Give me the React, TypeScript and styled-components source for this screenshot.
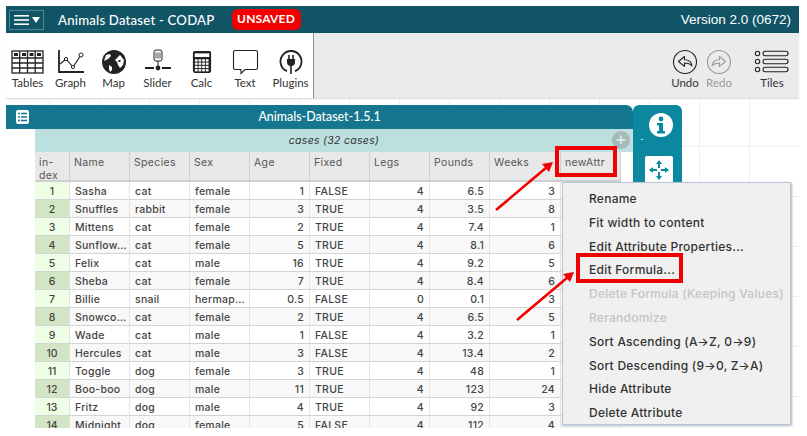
import React from "react";
import styled, { createGlobalStyle } from "styled-components";

const Global = createGlobalStyle`
  html, body { margin: 0; padding: 0; background: #fff; }
  body { width: 807px; height: 436px; overflow: hidden; font-family: "Inter", "Liberation Sans", sans-serif; }
`;

const Page = styled.div`
  position: relative;
  width: 807px;
  height: 436px;
  padding: 6px 8px 8px 6px;
  box-sizing: border-box;
  display: flex;
  flex-direction: column;
  overflow: hidden;
`;

const Header = styled.header`
  height: 27px;
  flex: none;
  background: #115466;
  color: #fff;
  display: flex;
  align-items: center;
  padding: 0 8px 0 3px;
`;

const MenuButton = styled.div`
  width: 35px;
  height: 20px;
  box-sizing: border-box;
  border: 1px solid #4f8592;
  display: flex;
  align-items: center;
  justify-content: center;
  gap: 2px;
`;

const Title = styled.div`
  margin-left: 14px;
  font: 500 13.2px "Lato", sans-serif;
  letter-spacing: 0.2px;
`;

const Unsaved = styled.div`
  margin-left: 17px;
  width: 69px;
  height: 21px;
  border-radius: 6px;
  background: #f20000;
  font: 700 12px/20px "Lato", sans-serif;
  text-align: center;
  letter-spacing: 0.2px;
`;

const Version = styled.div`
  margin-left: auto;
  font: 400 13.5px "Liberation Sans", sans-serif;
`;

const Toolbar = styled.div`
  height: 65px;
  flex: none;
  display: flex;
  background: #ebebeb;
  box-shadow: 0 1px 1px #ddd;
  position: relative;
`;

const Tools = styled.div`
  width: 308px;
  background: #fff;
  border-right: 1px solid #8f8f8f;
  display: flex;
  padding-top: 16px;
  box-sizing: border-box;
`;

const Tool = styled.div<{ $w: number; $muted?: boolean; $gap?: number }>`
  width: ${(p) => p.$w}px;
  margin-left: ${(p) => p.$gap ?? 0}px;
  flex: none;
  display: flex;
  flex-direction: column;
  align-items: center;
  font: 400 11.5px/14px "Lato", sans-serif;
  color: ${(p) => (p.$muted ? "#9a9a9a" : "#333")};
  svg { height: 26px; display: block; margin-bottom: 1px; }
`;

const RightTools = styled.div`
  margin-left: auto;
  display: flex;
  padding-top: 16px;
`;

const Workspace = styled.div`
  flex: 1;
  background-color: #fff;
  background-image:
    linear-gradient(#f0f0f0 1px, transparent 1px),
    linear-gradient(90deg, #f0f0f0 1px, transparent 1px);
  background-size: 50px 50px;
  background-position: -7px -2px;
  display: flex;
  align-items: flex-start;
  padding-top: 7px;
  overflow: hidden;
`;

const TableWindow = styled.div`
  width: 627px;
  flex: none;
  background: #fff;
`;

const TitleBar = styled.div`
  height: 24px;
  background: #14768f;
  border-top-right-radius: 7px;
  color: #fff;
  font: 500 12.4px/24px "Lato", sans-serif;
  text-align: center;
  position: relative;
  svg { position: absolute; left: 9px; top: 4px; }
`;

const TableBody = styled.div`
  margin-left: 29px;
  position: relative;
`;

const CasesBar = styled.div`
  height: 23px;
  background: #bcdfdf;
  font: italic 400 10.5px/23px "Inter", sans-serif;
  letter-spacing: 0.3px;
  color: #333;
  text-align: center;
`;

const AddCircle = styled.div`
  position: absolute;
  right: 3px;
  top: 2px;
  width: 18px;
  height: 18px;
  border-radius: 50%;
  background: #a6b9b9;
  color: #d9e8e8;
  font: 700 17px/17px "Liberation Sans", sans-serif;
  text-align: center;
`;

const Grid = styled.div`
  display: grid;
  width: 586px;
  grid-template-columns: 35px repeat(7, 60px) 71px 60px;
`;

const HeadCell = styled.div`
  height: 30px;
  box-sizing: border-box;
  background: #e8e8e8;
  border-right: 1px solid #cfcfcf;
  border-bottom: 2px solid #cfcfcf;
  padding: 5px 4px;
  font: 400 10.5px/12.5px "Inter", sans-serif;
  letter-spacing: 0.35px;
  color: #555;
`;

const IndexCell = styled.div<{ $even: boolean }>`
  height: 18px;
  box-sizing: border-box;
  background: ${(p) => (p.$even ? "#d2e6c6" : "#eefee4")};
  border-right: 1px solid #e0e0e0;
  border-bottom: 1px solid #d4d4d4;
  font: 500 10.5px/19px "Inter", sans-serif;
  color: #444;
  text-align: center;
  overflow: hidden;
`;

const Cell = styled.div<{ $even: boolean; $right?: boolean }>`
  height: 18px;
  box-sizing: border-box;
  background: ${(p) => (p.$even ? "#f8f8f8" : "#fff")};
  border-right: 1px solid #e4e4e4;
  border-bottom: 1px solid #d4d4d4;
  padding: 0 5px;
  font: 500 10.5px/19px "Inter", sans-serif;
  letter-spacing: 0.25px;
  color: #444;
  text-align: ${(p) => (p.$right ? "right" : "left")};
  white-space: nowrap;
  overflow: hidden;
`;

const Inspector = styled.div`
  width: 49px;
  height: 90px;
  flex: none;
  background: #0b889f;
  border-radius: 6px 6px 0 0;
  display: flex;
  flex-direction: column;
  align-items: center;
  padding-top: 8px;
  box-sizing: border-box;
  position: relative;
`;

const InfoBadge = styled.div`
  margin-left: 6px;
  height: 24px;
`;

const InspectorMove = styled.div`
  margin-top: 19px;
  margin-left: 3px;
  width: 28px;
  height: 28px;
  background: #fff;
  border-radius: 2px;
  display: flex;
  align-items: center;
  justify-content: center;
`;

const Speck = styled.div`
  position: absolute;
  left: 8px;
  top: 34px;
  width: 2px;
  height: 1px;
  background: #d8eef2;
`;

const Menu = styled.div`
  position: absolute;
  left: 562px;
  top: 182px;
  width: 229px;
  height: 243px;
  box-sizing: border-box;
  background: #f0f0f0;
  border: 1px solid #b8c4d8;
  box-shadow: 1px 1px 2px #b0b8c4;
  padding: 4px 0 0 26px;
  z-index: 3;
`;

const MenuItem = styled.div<{ $off?: boolean }>`
  height: 23.8px;
  font: 500 12px/23.8px "Inter", sans-serif;
  letter-spacing: 0.25px;
  color: ${(p) => (p.$off ? "#c4c4c4" : "#333")};
  white-space: nowrap;
`;

const RedBox = styled.div<{ $x: number; $y: number; $w: number; $h: number }>`
  position: absolute;
  left: ${(p) => p.$x}px;
  top: ${(p) => p.$y}px;
  width: ${(p) => p.$w}px;
  height: ${(p) => p.$h}px;
  box-sizing: border-box;
  border: 4px solid #f00000;
  z-index: 4;
`;

const Arrows = styled.svg`
  position: absolute;
  left: 0;
  top: 0;
  z-index: 5;
  pointer-events: none;
`;

const columns = ["Name", "Species", "Sex", "Age", "Fixed", "Legs", "Pounds", "Weeks", "newAttr"];
const rows: (string | number)[][] = [
  ["Sasha", "cat", "female", 1, "FALSE", 4, 6.5, 3],
  ["Snuffles", "rabbit", "female", 3, "TRUE", 4, 3.5, 8],
  ["Mittens", "cat", "female", 2, "TRUE", 4, 7.4, 1],
  ["Sunflow…", "cat", "female", 5, "TRUE", 4, 8.1, 6],
  ["Felix", "cat", "male", 16, "TRUE", 4, 9.2, 5],
  ["Sheba", "cat", "female", 7, "TRUE", 4, 8.4, 6],
  ["Billie", "snail", "hermap…", 0.5, "FALSE", 0, 0.1, 3],
  ["Snowco…", "cat", "female", 2, "TRUE", 4, 6.5, 5],
  ["Wade", "cat", "male", 1, "FALSE", 4, 3.2, 1],
  ["Hercules", "cat", "male", 3, "FALSE", 4, 13.4, 2],
  ["Toggle", "dog", "female", 3, "TRUE", 4, 48, 1],
  ["Boo-boo", "dog", "male", 11, "TRUE", 4, 123, 24],
  ["Fritz", "dog", "male", 4, "TRUE", 4, 92, 3],
  ["Midnight", "dog", "female", 5, "FALSE", 4, 112, 4],
];
const menu: [string, boolean?][] = [
  ["Rename"],
  ["Fit width to content"],
  ["Edit Attribute Properties..."],
  ["Edit Formula..."],
  ["Delete Formula (Keeping Values)", true],
  ["Rerandomize", true],
  ["Sort Ascending (A→Z, 0→9)"],
  ["Sort Descending (9→0, Z→A)"],
  ["Hide Attribute"],
  ["Delete Attribute"],
];

const TablesIcon = () => (
  <svg viewBox="0 0 33 26" width="33" fill="none" stroke="#222" strokeWidth="1.3">
    <rect x="1" y="2" width="31" height="22" />
    <path d="M1 9h31M1 14h31M1 19h31M8.7 2v22M16.5 2v22M24.2 2v22" />
    <path d="M3 4h4v3H3zM11 4h4v3h-4zM18.5 4h4v3h-4zM26 4h4v3h-4z" fill="#222" stroke="none" />
  </svg>
);
const GraphIcon = () => (
  <svg viewBox="0 0 28 26" width="28" fill="none" stroke="#222">
    <path d="M2 1v22h25" strokeWidth="1.8" />
    <path d="M3 15l6-5 7 8 8-12" strokeWidth="1.1" />
    <circle cx="9" cy="10" r="1.6" strokeWidth="1" fill="#fff" />
    <circle cx="16" cy="18" r="1.6" strokeWidth="1" fill="#fff" />
    <circle cx="24" cy="6" r="2" strokeWidth="1" fill="#fff" />
  </svg>
);
const MapIcon = () => (
  <svg viewBox="0 0 26 26" width="26">
    <circle cx="13" cy="13" r="12" fill="#222" />
    <path d="M5 6l4-1 1 2-3 3-4 2zM16 9l3-3 4 5-1 5-3 3-2-3-1-3-2-2zM8 16l3 2 0 3-2 2-1-3z" fill="#fff" />
    <path d="M17.5 11h2v2h-2z" fill="#222" />
  </svg>
);
const SliderIcon = () => (
  <svg viewBox="0 0 28 26" width="28" fill="none" stroke="#222">
    <rect x="10" y="1" width="8" height="11" rx="2" strokeWidth="1" />
    <path d="M12 3.5v6M14 3.5v6M16 3.5v6" strokeWidth="0.8" />
    <path d="M14 12v6" strokeWidth="1" />
    <path d="M1 19h9M18 19h9" strokeWidth="2.2" />
    <circle cx="14" cy="19" r="2.4" fill="#222" stroke="none" />
  </svg>
);
const CalcIcon = () => (
  <svg viewBox="0 0 22 26" width="20">
    <rect x="1" y="1" width="20" height="24" rx="2" fill="#222" />
    <rect x="3" y="3.5" width="16" height="4" fill="#fff" />
    {[0, 1, 2, 3].flatMap((r) =>
      [0, 1, 2, 3].map((c) => <rect key={`${r}${c}`} x={3.2 + c * 4} y={10 + r * 3.6} width="3" height="2.5" fill="#fff" />)
    )}
  </svg>
);
const TextIcon = () => (
  <svg viewBox="0 0 27 26" width="27" fill="#fff" stroke="#222" strokeWidth="1.1">
    <path d="M3 1.5h21a1.5 1.5 0 0 1 1.5 1.5v16a1.5 1.5 0 0 1-1.5 1.5H13l-4 4v-4H3A1.5 1.5 0 0 1 1.5 19V3A1.5 1.5 0 0 1 3 1.5z" />
  </svg>
);
const PluginIcon = () => (
  <svg viewBox="0 0 26 26" width="26" fill="none" stroke="#222">
    <path d="M9 22.2A10.5 10.5 0 1 1 17 22.2" strokeWidth="1.8" />
    <path d="M9 10h8v3a4 4 0 0 1-8 0z" fill="#222" stroke="none" />
    <path d="M11 6v4M15 6v4M13 16v9" strokeWidth="1.6" />
  </svg>
);
const UndoIcon = ({ color, flip }: { color: string; flip?: boolean }) => (
  <svg viewBox="0 0 26 26" width="26" fill="none" stroke={color}>
    <circle cx="13" cy="13" r="11.5" strokeWidth="1.1" />
    <path
      d="M6.5 12.5l6-5v3.2c4 0 7 1.6 7.5 6.3-2-2.6-4-3-7.5-3v3.4z"
      strokeWidth="1.1"
      strokeLinejoin="round"
      transform={flip ? "matrix(-1 0 0 1 26 0)" : undefined}
    />
  </svg>
);
const TilesIcon = () => (
  <svg viewBox="0 0 36 25" width="36" fill="none" stroke="#222" strokeWidth="1.1">
    {[4, 12, 20].map((y) => (
      <g key={y}>
        <circle cx="3.5" cy={y} r="2.2" />
        <rect x="9" y={y - 2.2} width="25" height="4.4" rx="2.2" />
      </g>
    ))}
  </svg>
);

export default function App() {
  return (
    <>
      <Global />
      <Page>
        <Header>
          <MenuButton>
            <svg width="16" height="12" viewBox="0 0 16 12" fill="#fff">
              <rect y="1" width="15" height="1.6" />
              <rect y="5.2" width="15" height="1.6" />
              <rect y="9.4" width="15" height="1.6" />
            </svg>
            <svg width="8" height="6" viewBox="0 0 8 6" fill="#fff">
              <path d="M0 0h8L4 6z" />
            </svg>
          </MenuButton>
          <Title>Animals Dataset - CODAP</Title>
          <Unsaved>UNSAVED</Unsaved>
          <Version>Version 2.0 (0672)</Version>
        </Header>
        <Toolbar>
          <Tools>
            <Tool $w={43}><TablesIcon />Tables</Tool>
            <Tool $w={43}><GraphIcon />Graph</Tool>
            <Tool $w={43}><MapIcon />Map</Tool>
            <Tool $w={45}><SliderIcon />Slider</Tool>
            <Tool $w={43}><CalcIcon />Calc</Tool>
            <Tool $w={44}><TextIcon />Text</Tool>
            <Tool $w={47}><PluginIcon />Plugins</Tool>
          </Tools>
          <RightTools>
            <Tool $w={34}><UndoIcon color="#222" />Undo</Tool>
            <Tool $w={34} $muted><UndoIcon color="#999" flip />Redo</Tool>
            <Tool $w={54} $gap={9}><TilesIcon />Tiles</Tool>
          </RightTools>
        </Toolbar>
        <Workspace>
          <TableWindow>
            <TitleBar>
              <svg width="15" height="16" viewBox="0 0 15 16">
                <rect x="1" y="1" width="13" height="14" rx="2" fill="#fff" />
                <path d="M3 4.5h2M6 4.5h6M3 8h2M6 8h6M3 11.5h2M6 11.5h6" stroke="#14768f" strokeWidth="1.4" />
              </svg>
              Animals-Dataset-1.5.1
            </TitleBar>
            <TableBody>
              <CasesBar>cases (32 cases)</CasesBar>
              <AddCircle>+</AddCircle>
              <Grid>
                <HeadCell>in-<br />dex</HeadCell>
                {columns.map((c) => <HeadCell key={c}>{c}</HeadCell>)}
                {rows.map((r, i) => (
                  <React.Fragment key={i}>
                    <IndexCell $even={i % 2 === 1}>{i + 1}</IndexCell>
                    {r.map((v, j) => (
                      <Cell key={j} $even={i % 2 === 1} $right={typeof v === "number"}>{v}</Cell>
                    ))}
                    <Cell $even={i % 2 === 1} />
                  </React.Fragment>
                ))}
              </Grid>
            </TableBody>
          </TableWindow>
          <Inspector>
            <Speck />
            <InfoBadge>
              <svg width="24" height="24" viewBox="0 0 24 24">
                <circle cx="12" cy="12" r="12" fill="#fff" />
                <circle cx="12" cy="6" r="2.4" fill="#0b889f" />
                <path d="M8 10h6v8h2v2.5H8V18h2v-5.5H8z" fill="#0b889f" />
              </svg>
            </InfoBadge>
            <InspectorMove>
              <svg width="20" height="20" viewBox="0 0 20 20" fill="#0b889f">
                <path d="M10 0l3 4h-2v4H9V4H7zM10 20l-3-4h2v-4h2v4h2zM0 10l4-3v2h4v2H4v2zM20 10l-4 3v-2h-4V9h4V7z" />
              </svg>
            </InspectorMove>
          </Inspector>
        </Workspace>
        <Menu>
          {menu.map(([label, off]) => <MenuItem key={label} $off={off}>{label}</MenuItem>)}
        </Menu>
        <RedBox $x={555} $y={146} $w={62} $h={31} />
        <RedBox $x={576} $y={253} $w={107} $h={30} />
        <Arrows width="807" height="436" viewBox="0 0 807 436">
          <path d="M496 210L547 167" stroke="#f00000" strokeWidth="2.6" />
          <path d="M553 162l-11 2 7 8z" fill="#f00000" />
          <path d="M517 320L568 277" stroke="#f00000" strokeWidth="2.6" />
          <path d="M574 272l-11 2 7 8z" fill="#f00000" />
        </Arrows>
      </Page>
    </>
  );
}
